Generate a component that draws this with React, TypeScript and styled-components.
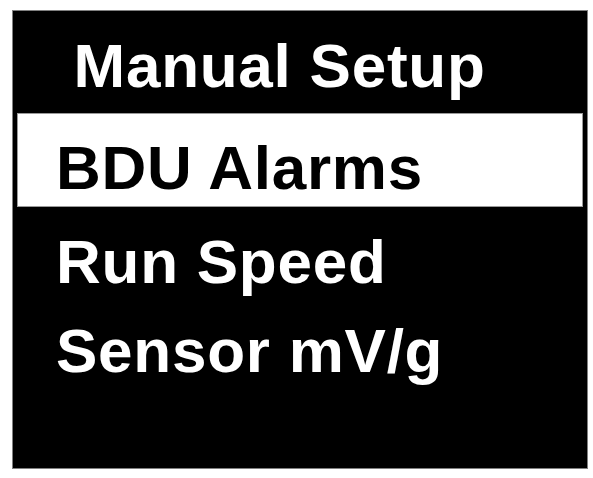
import styled, { createGlobalStyle } from "styled-components";

const GlobalStyle = createGlobalStyle`
  html, body {
    margin: 0;
    padding: 0;
    background: #ffffff;
  }
`;

const Page = styled.div`
  padding: 10px 0 0 12px;
`;

const Screen = styled.div`
  box-sizing: border-box;
  width: 576px;
  height: 459px;
  background: #000000;
  border: 1px solid #808080;
  padding-top: 23.5px;
  display: flex;
  flex-direction: column;
  font-family: "Liberation Sans", Arial, sans-serif;
  font-weight: 700;
  font-size: 62px;
  line-height: 62px;
  letter-spacing: 0.75px;
`;

const Title = styled.div`
  color: #ffffff;
  padding-left: 60.5px;
  height: 62px;
  white-space: nowrap;
`;

const Menu = styled.div`
  display: flex;
  flex-direction: column;
  margin-top: 16.5px;
`;

const Item = styled.div<{ $selected?: boolean }>`
  box-sizing: border-box;
  margin: ${(p) => (p.$selected ? "0 4px" : "4px 4px 0")};
  height: ${(p) => (p.$selected ? "94px" : "89px")};
  padding: 22.5px 0 0 38px;
  border: 1px solid ${(p) => (p.$selected ? "#9a9a9a" : "transparent")};
  background: ${(p) => (p.$selected ? "#ffffff" : "transparent")};
  color: ${(p) => (p.$selected ? "#000000" : "#ffffff")};
  white-space: nowrap;

  & + & {
    margin-top: 0;
  }
`;

const items = ["BDU Alarms", "Run Speed", "Sensor mV/g"];

export default function App() {
  const selected = 0;
  return (
    <Page>
      <GlobalStyle />
      <Screen>
        <Title>Manual Setup</Title>
        <Menu>
          {items.map((label, i) => (
            <Item key={label} $selected={i === selected}>
              {label}
            </Item>
          ))}
        </Menu>
      </Screen>
    </Page>
  );
}
